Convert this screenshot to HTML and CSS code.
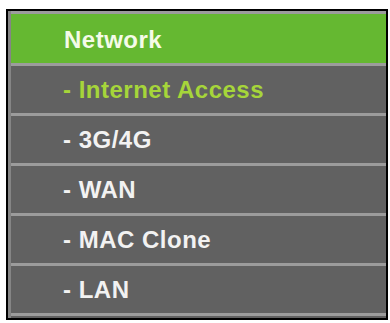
FILE: index.html
```html
<!DOCTYPE html>
<html>
<head>
<meta charset="utf-8">
<link rel="stylesheet" href="styles.css">
</head>
<body>
<nav class="menu">
  <div class="menu-head">Network</div>
  <ul class="menu-list">
    <li class="menu-item active">- Internet Access</li>
    <li class="menu-item">- 3G/4G</li>
    <li class="menu-item">- WAN</li>
    <li class="menu-item">- MAC Clone</li>
    <li class="menu-item">- LAN</li>
  </ul>
</nav>
</body>
</html>
```

FILE: styles.css
```css
html, body {
  margin: 0;
  padding: 0;
  background: #ffffff;
}
body {
  padding: 9px 0 0 6px;
  font-family: "Liberation Sans", Arial, sans-serif;
}
.menu {
  width: 378px;
  border: 2px solid #000;
  background: #616161;
  box-shadow: inset 3px 0 0 #858585;
  padding-bottom: 2px;
}
.menu-head {
  height: 47px;
  padding-top: 2px;
  line-height: 47px;
  margin-left: 3px;
  background: #65b831;
  border-top: 3px solid #9c9c9c;
  border-bottom: 3px solid #9c9c9c;
  color: #f4fbe8;
  font-weight: bold;
  font-size: 24px;
  letter-spacing: 0.5px;
  padding-left: 53px;
}
.menu-list {
  list-style: none;
  margin: 0;
  padding: 0;
}
.menu-item {
  height: 47px;
  line-height: 47px;
  margin-left: 3px;
  padding-left: 52px;
  border-bottom: 3px solid #9c9c9c;
  color: #f2f2f2;
  font-weight: bold;
  font-size: 24px;
  letter-spacing: 0.5px;
}
.menu-item.active {
  color: #a6d53a;
}
```
